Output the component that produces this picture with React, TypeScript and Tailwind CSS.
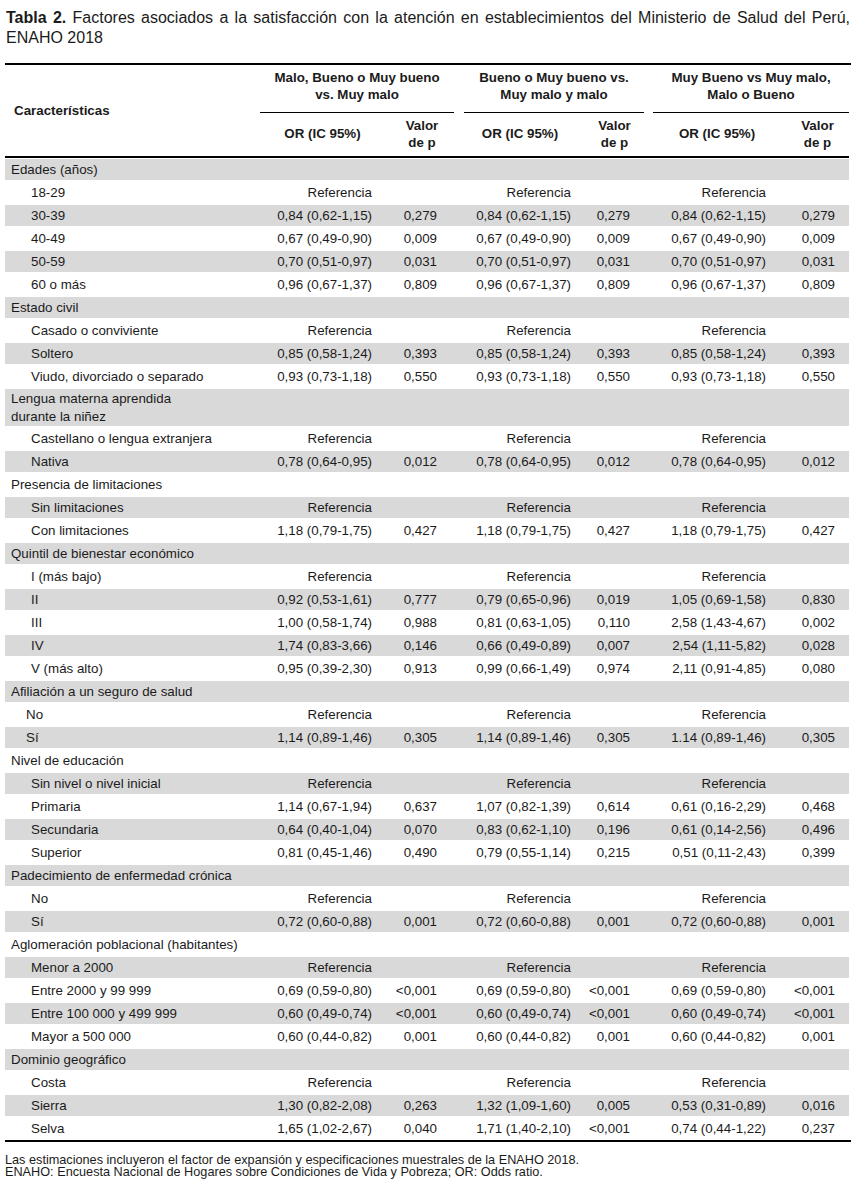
import React from "react";

type Cell = [string, string];
type Row = { label: string; cells?: Cell[]; cat?: boolean; indent?: string; tall?: boolean };

const REF: Cell[] = [["Referencia", ""], ["Referencia", ""], ["Referencia", ""]];
const same = (or: string, p: string): Cell[] => [[or, p], [or, p], [or, p]];

const rows: Row[] = [
  { label: "Edades (años)", cat: true },
  { label: "18-29", cells: REF },
  { label: "30-39", cells: same("0,84 (0,62-1,15)", "0,279") },
  { label: "40-49", cells: same("0,67 (0,49-0,90)", "0,009") },
  { label: "50-59", cells: same("0,70 (0,51-0,97)", "0,031") },
  { label: "60 o más", cells: same("0,96 (0,67-1,37)", "0,809") },
  { label: "Estado civil", cat: true },
  { label: "Casado o conviviente", cells: REF },
  { label: "Soltero", cells: same("0,85 (0,58-1,24)", "0,393") },
  { label: "Viudo, divorciado o separado", cells: same("0,93 (0,73-1,18)", "0,550") },
  { label: "Lengua materna aprendida", cat: true, tall: true },
  { label: "Castellano o lengua extranjera", cells: REF },
  { label: "Nativa", cells: same("0,78 (0,64-0,95)", "0,012") },
  { label: "Presencia de limitaciones", cat: true },
  { label: "Sin limitaciones", cells: REF },
  { label: "Con limitaciones", cells: same("1,18 (0,79-1,75)", "0,427") },
  { label: "Quintil de bienestar económico", cat: true },
  { label: "I (más bajo)", cells: REF },
  {
    label: "II",
    cells: [["0,92 (0,53-1,61)", "0,777"], ["0,79 (0,65-0,96)", "0,019"], ["1,05 (0,69-1,58)", "0,830"]],
  },
  {
    label: "III",
    cells: [["1,00 (0,58-1,74)", "0,988"], ["0,81 (0,63-1,05)", "0,110"], ["2,58 (1,43-4,67)", "0,002"]],
  },
  {
    label: "IV",
    cells: [["1,74 (0,83-3,66)", "0,146"], ["0,66 (0,49-0,89)", "0,007"], ["2,54 (1,11-5,82)", "0,028"]],
  },
  {
    label: "V (más alto)",
    cells: [["0,95 (0,39-2,30)", "0,913"], ["0,99 (0,66-1,49)", "0,974"], ["2,11 (0,91-4,85)", "0,080"]],
  },
  { label: "Afiliación a un seguro de salud", cat: true },
  { label: "No", cells: REF, indent: "pl-[21px]" },
  {
    label: "Sí",
    indent: "pl-[21px]",
    cells: [["1,14 (0,89-1,46)", "0,305"], ["1,14 (0,89-1,46)", "0,305"], ["1.14 (0,89-1,46)", "0,305"]],
  },
  { label: "Nivel de educación", cat: true },
  { label: "Sin nivel o nivel inicial", cells: REF },
  {
    label: "Primaria",
    cells: [["1,14 (0,67-1,94)", "0,637"], ["1,07 (0,82-1,39)", "0,614"], ["0,61 (0,16-2,29)", "0,468"]],
  },
  {
    label: "Secundaria",
    cells: [["0,64 (0,40-1,04)", "0,070"], ["0,83 (0,62-1,10)", "0,196"], ["0,61 (0,14-2,56)", "0,496"]],
  },
  {
    label: "Superior",
    cells: [["0,81 (0,45-1,46)", "0,490"], ["0,79 (0,55-1,14)", "0,215"], ["0,51 (0,11-2,43)", "0,399"]],
  },
  { label: "Padecimiento de enfermedad crónica", cat: true },
  { label: "No", cells: REF },
  { label: "Sí", cells: same("0,72 (0,60-0,88)", "0,001") },
  { label: "Aglomeración poblacional (habitantes)", cat: true },
  { label: "Menor a 2000", cells: REF },
  { label: "Entre 2000 y 99 999", cells: same("0,69 (0,59-0,80)", "<0,001") },
  { label: "Entre 100 000 y 499 999", cells: same("0,60 (0,49-0,74)", "<0,001") },
  { label: "Mayor a 500 000", cells: same("0,60 (0,44-0,82)", "0,001") },
  { label: "Dominio geográfico", cat: true },
  { label: "Costa", cells: REF },
  {
    label: "Sierra",
    cells: [["1,30 (0,82-2,08)", "0,263"], ["1,32 (1,09-1,60)", "0,005"], ["0,53 (0,31-0,89)", "0,016"]],
  },
  {
    label: "Selva",
    cells: [["1,65 (1,02-2,67)", "0,040"], ["1,71 (1,40-2,10)", "<0,001"], ["0,74 (0,44-1,22)", "0,237"]],
  },
];

// right padding per data column so values line up like the original
const orPad = ["pr-[13px]", "pr-[10px]", "pr-[20px]"];
const pPad = ["pr-[22px]", "pr-[18px]", "pr-[14px]"];
const groups = [
  { lines: ["Malo, Bueno o Muy bueno", "vs. Muy malo"], rule: "mr-[5px]" },
  { lines: ["Bueno o Muy bueno vs.", "Muy malo y malo"], rule: "ml-[5px] mr-[4px]" },
  { lines: ["Muy Bueno vs Muy malo,", "Malo o Bueno"], rule: "ml-[5px]" },
];

export default function App() {
  return (
    <div className="w-[856px] min-h-[1182px] bg-white text-[#1b1b1b] font-['Liberation_Sans',Arial,sans-serif]">
      {/* TITLE */}
      <p className="px-[6px] pt-[8px] text-[16px] leading-[20px] text-justify">
        <b>Tabla 2.</b> Factores asociados a la satisfacción con la atención en establecimientos del Ministerio de
        Salud del Perú, ENAHO 2018
      </p>

      {/* TABLE */}
      <div className="mx-[5px] mt-[15px] border-t-2 border-b-2 border-black">
        <table className="w-[844px] table-fixed border-separate border-spacing-0 text-[13.33px]">
          <colgroup>
            <col className="w-[255px]" />
            <col className="w-[125px]" />
            <col className="w-[74px]" />
            <col className="w-[122px]" />
            <col className="w-[67px]" />
            <col className="w-[138px]" />
            <col className="w-[63px]" />
          </colgroup>
          <thead className="font-bold leading-[17px]">
            <tr>
              <th rowSpan={2} className="text-left align-middle pl-[9px] border-b-2 border-black">
                Características
              </th>
              {groups.map((g, i) => (
                <th key={i} colSpan={2} className="p-0 pt-[4px] align-top">
                  <div className={`text-center pb-[9px] border-b border-black ${g.rule}`}>
                    {g.lines[0]}
                    <br />
                    {g.lines[1]}
                  </div>
                </th>
              ))}
            </tr>
            <tr>
              {groups.map((_, i) => (
                <React.Fragment key={i}>
                  <th className="h-[45px] text-center align-middle pb-[2px] border-b-2 border-black">OR (IC 95%)</th>
                  <th className="text-center align-middle pb-[2px] border-b-2 border-black">
                    Valor
                    <br />
                    de p
                  </th>
                </React.Fragment>
              ))}
            </tr>
          </thead>
          <tbody>
            {rows.map((r, i) => {
              const gray = i % 2 === 0;
              const bg = gray ? "bg-[#d9d9d9] border-y border-white" : "";
              if (r.cat) {
                return (
                  <tr key={i}>
                    <td
                      colSpan={7}
                      className={`${r.tall ? "h-[37px] leading-[18px]" : "h-[23px]"} pl-[6px] pt-[1px] ${bg}`}
                    >
                      {r.label}
                      {r.tall && (
                        <>
                          <br />
                          durante la niñez
                        </>
                      )}
                    </td>
                  </tr>
                );
              }
              return (
                <tr key={i}>
                  <td className={`h-[23px] pt-[1px] whitespace-nowrap ${r.indent ?? "pl-[26px]"} ${bg}`}>{r.label}</td>
                  {r.cells!.map(([or, p], j) => (
                    <React.Fragment key={j}>
                      <td className={`pt-[1px] text-right whitespace-nowrap ${orPad[j]} ${bg}`}>{or}</td>
                      <td className={`pt-[1px] text-right whitespace-nowrap ${pPad[j]} ${bg}`}>{p}</td>
                    </React.Fragment>
                  ))}
                </tr>
              );
            })}
          </tbody>
        </table>
      </div>

      {/* NOTES */}
      <div className="px-[5px] pt-[12px] text-[12.7px] leading-[12px]">
        <p>Las estimaciones incluyeron el factor de expansión y especificaciones muestrales de la ENAHO 2018.</p>
        <p>ENAHO: Encuesta Nacional de Hogares sobre Condiciones de Vida y Pobreza; OR: Odds ratio.</p>
      </div>
    </div>
  );
}
